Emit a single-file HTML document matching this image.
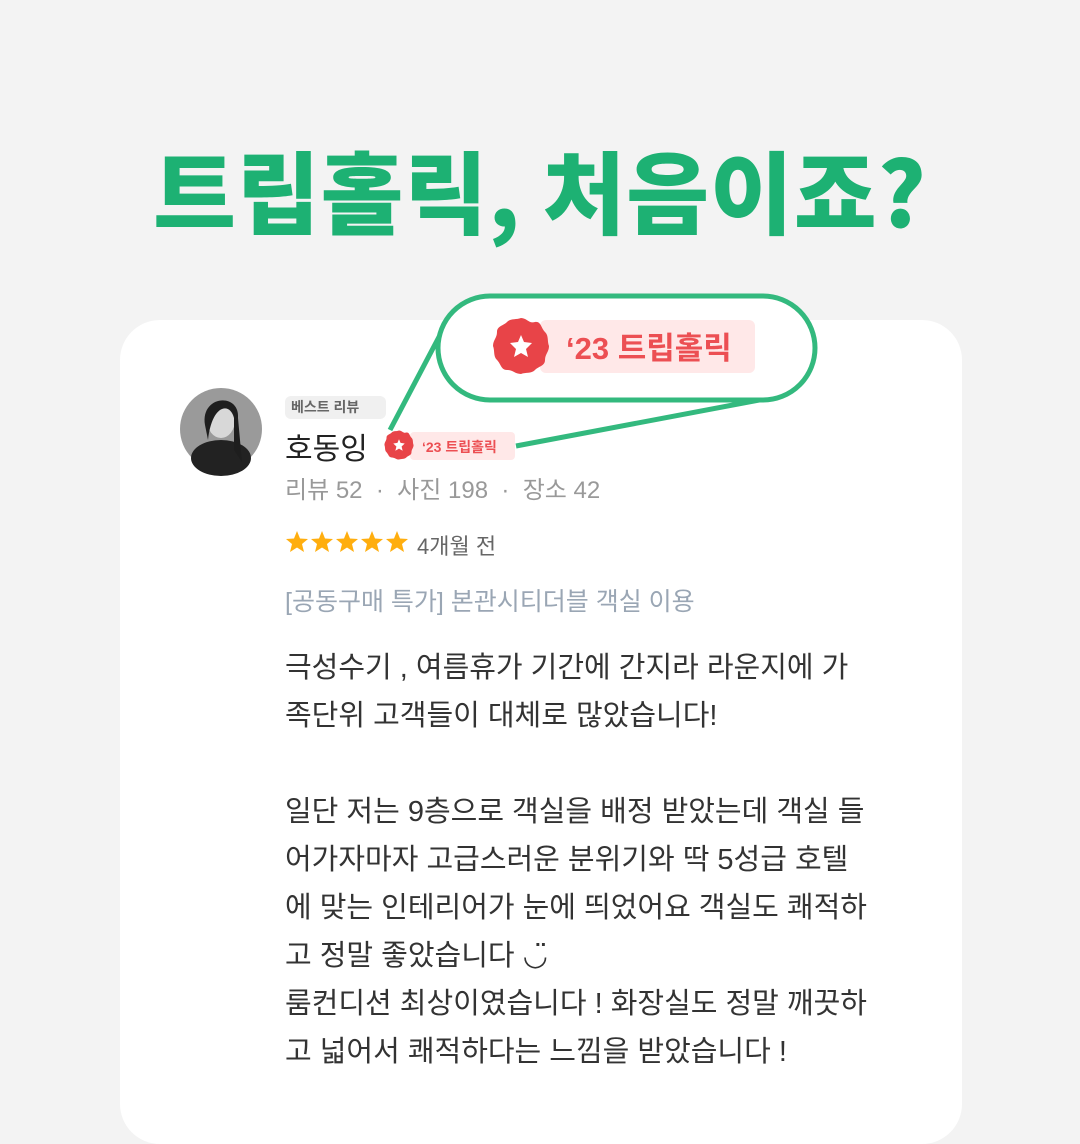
<!DOCTYPE html>
<html><head><meta charset="utf-8"><style>
*{margin:0;padding:0;box-sizing:border-box}
html,body{width:1080px;height:1144px;overflow:hidden}
body{background:#f3f3f3;position:relative;font-family:"Liberation Sans","Noto Sans CJK KR",sans-serif}
.abs{position:absolute}
h1{position:absolute;left:0;width:1080px;top:128px;text-align:center;font-family:"Noto Sans CJK KR",sans-serif;font-weight:900;font-size:90px;letter-spacing:1px;color:#1db173;line-height:120px}
.card{left:120px;top:320px;width:842px;height:824px;background:#fff;border-radius:40px 40px 40px 40px}
.t{position:absolute;white-space:nowrap}
.body{left:285px;top:644px;font-size:29px;line-height:48px;color:#333;white-space:normal;width:660px}
</style></head><body>
<h1>트립홀릭, 처음이죠?</h1>
<div class="abs card"></div>
<svg class="abs" style="left:0;top:0" width="1080" height="1144">
<defs>
<g id="seal"><path d="M0,-28 C6,-28 8,-22 14,-24 C20,-25 20,-18 24,-14 C28,-10 26,-5 28,0 C28,6 24,8 24,14 C24,20 18,20 14,24 C10,28 5,26 0,28 C-6,28 -8,24 -14,24 C-20,24 -20,18 -24,14 C-28,10 -26,5 -28,0 C-28,-6 -24,-8 -24,-14 C-24,-20 -18,-20 -14,-24 C-10,-28 -5,-26 0,-28Z" fill="#e84448"/>
<path d="M0,-11 L3,-4 L11,-3 L5,3 L7,11 L0,7 L-7,11 L-5,3 L-11,-3 L-3,-4Z" fill="#fff"/></g>
</defs>
<line x1="390" y1="430" x2="440" y2="335" stroke="#33b97e" stroke-width="5"/>
<line x1="516" y1="446" x2="770" y2="398" stroke="#33b97e" stroke-width="5"/>
<rect x="438" y="296" width="377" height="104" rx="52" fill="#fff" stroke="#33b97e" stroke-width="5"/>
<rect x="540" y="320" width="215" height="53" rx="6" fill="#ffe8e8"/>
<use href="#seal" transform="translate(521,346)"/>
<text x="566" y="359" font-family="Liberation Sans,Noto Sans CJK KR,sans-serif" font-weight="bold" font-size="31" fill="#ec4f53">‘23 트립홀릭</text>
<rect x="410" y="432" width="105" height="28" rx="4" fill="#ffe8e8"/>
<use href="#seal" transform="translate(399,445) scale(0.52)"/>
<text x="422" y="452" font-family="Liberation Sans,Noto Sans CJK KR,sans-serif" font-weight="bold" font-size="14" fill="#ec4f53">‘23 트립홀릭</text>
<circle cx="221" cy="429" r="41" fill="#9a9a9a"/>
<ellipse cx="221" cy="458" rx="30" ry="18" fill="#222"/>
<ellipse cx="221" cy="420" rx="14" ry="18" fill="#d8d8d8"/>
<path d="M205,425 C200,395 240,392 238,418 L242,462 L234,450 L234,418 C230,402 212,404 208,440Z" fill="#1e1e1e"/>
<rect x="285" y="396" width="101" height="23" rx="6" fill="#f0f0f0"/>
<g fill="#ffae0f">
<path id="st" d="M297,531 L300,538.5 L308,539 L302,544 L304,552 L297,547.5 L290,552 L292,544 L286,539 L294,538.5Z"/>
<use href="#st" x="25"/><use href="#st" x="50"/><use href="#st" x="75"/><use href="#st" x="100"/>
</g>
</svg>
<div class="t" style="left:291px;top:397px;font-size:14px;font-weight:bold;color:#666">베스트 리뷰</div>
<div class="t" style="left:285px;top:424px;font-size:30px;color:#222">호동잉</div>
<div class="t" style="left:285px;top:470px;font-size:24px;color:#999">리뷰 52 &nbsp;·&nbsp; 사진 198 &nbsp;·&nbsp; 장소 42</div>
<div class="t" style="left:417px;top:529px;font-size:22px;color:#666">4개월 전</div>
<div class="t" style="left:285px;top:582px;font-size:25px;color:#9aa6b4">[공동구매 특가] 본관시티더블 객실 이용</div>
<div class="t body">극성수기 , 여름휴가 기간에 간지라 라운지에 가<br>족단위 고객들이 대체로 많았습니다!<br><br>일단 저는 9층으로 객실을 배정 받았는데 객실 들<br>어가자마자 고급스러운 분위기와 딱 5성급 호텔<br>에 맞는 인테리어가 눈에 띄었어요 객실도 쾌적하<br>고 정말 좋았습니다 ◡̈<br>룸컨디션 최상이였습니다 ! 화장실도 정말 깨끗하<br>고 넓어서 쾌적하다는 느낌을 받았습니다 !</div>
</body></html>
